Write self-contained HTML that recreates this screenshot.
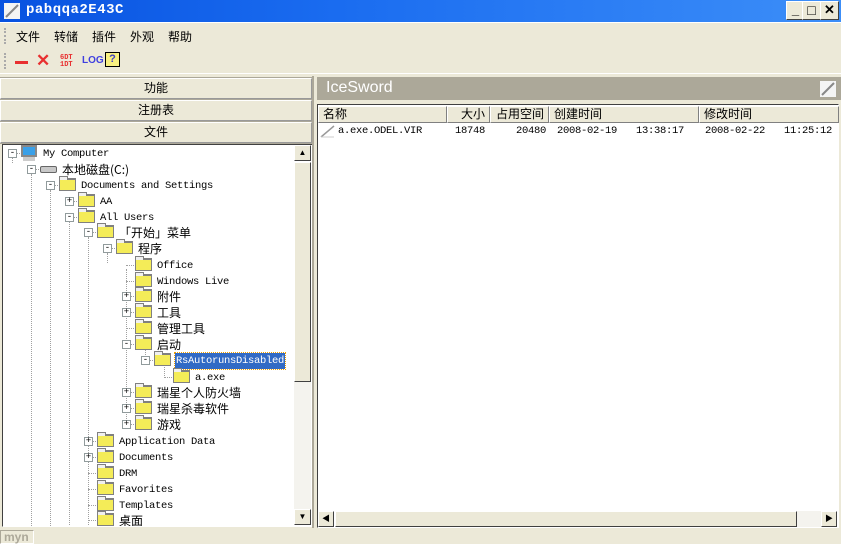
<!DOCTYPE html>
<html><head><meta charset="utf-8"><style>
*{margin:0;padding:0;box-sizing:border-box}
body{width:841px;height:544px;overflow:hidden;background:#ece9d8;position:relative;font-family:"Liberation Sans","Noto Sans CJK SC",sans-serif;font-size:12px;color:#000}
.a{position:absolute}
.title{left:0;top:0;width:841px;height:22px;background:linear-gradient(90deg,#0852e0 0%,#1a6cf0 40%,#3c8ef8 100%);}
.title span{position:absolute;left:26px;top:2px;color:#fff;font:bold 14px "Liberation Mono",monospace;letter-spacing:0.5px}
.wb{top:1px;width:19px;height:19px;background:#ece9d8;border:1px solid;border-color:#fff #404040 #404040 #fff;font:bold 13px "Liberation Sans",sans-serif;text-align:center;line-height:16px}
.menu span{position:absolute;top:28px;font-size:12px}
.btn{left:0;width:312px;height:21px;border:1px solid;border-color:#fff #999 #999 #fff;background:#ece9d8;text-align:center;line-height:19px;font-size:12px;outline:1px solid #aca899}
.tree{left:2px;top:144px;width:311px;height:383px;background:#fff;border:1px solid;border-color:#404040 #fff #fff #404040;overflow:hidden}
.t{position:absolute;font:10.5px "Liberation Mono","Noto Sans CJK SC",monospace;white-space:nowrap;letter-spacing:-0.3px}
.cj{font:12px "Noto Sans CJK SC","WenQuanYi Zen Hei",sans-serif;letter-spacing:0}
.box{position:absolute;width:9px;height:9px;border:1px solid #919b9c;background:#fff;font:9px/7px "Liberation Mono",monospace;text-align:center}
.fd{position:absolute;width:17px;height:13px;background:#f4ec58;border:1px solid #808080;border-top-width:2px}
.fd:before{content:"";position:absolute;left:-1px;top:-4px;width:7px;height:3px;background:#f0f0f0;border:1px solid #808080;border-bottom:none}
.vl{position:absolute;width:0;border-left:1px dotted #a0a0a0}
.hl{position:absolute;height:0;border-top:1px dotted #a0a0a0}
.sb{background:#ece9d8;border:1px solid;border-color:#fff #404040 #404040 #fff}
.hd{position:absolute;top:106px;height:17px;border:1px solid;border-color:#fff #808080 #808080 #fff;background:#ece9d8;font-size:12px;line-height:15px;padding:0 4px}
.rw{position:absolute;top:124px;font:10.5px "Liberation Mono",monospace;line-height:14px;letter-spacing:-0.3px}
</style></head><body>
<div class="a title"><span>pabqqa2E43C</span>
<svg class="a" style="left:4px;top:3px" width="16" height="16"><rect x="0" y="0" width="16" height="16" fill="#f4f4f4"/><line x1="2" y1="14" x2="14" y2="2" stroke="#888" stroke-width="2"/></svg>
</div>
<div class="a wb" style="left:786px">_</div>
<div class="a wb" style="left:802px;font-size:14px">□</div>
<div class="a wb" style="left:820px">✕</div>
<div class="a" style="left:0;top:22px;width:841px;height:1px;background:#fff"></div>
<div class="a" style="left:4px;top:28px;width:3px;height:16px;border-left:2px dotted #aaa"></div>
<div class="menu"><span style="left:16px">文件</span><span style="left:54px">转储</span><span style="left:92px">插件</span><span style="left:130px">外观</span><span style="left:168px">帮助</span></div>
<div class="a" style="left:4px;top:53px;width:3px;height:16px;border-left:2px dotted #aaa"></div>
<div class="a" style="left:15px;top:61px;width:13px;height:3px;background:#e83030"></div>
<div class="a" style="left:36px;top:52px;color:#e83030;font:bold 17px/18px 'Liberation Sans',sans-serif">✕</div>
<div class="a" style="left:60px;top:55px;color:#e83030;font:bold 7px/7px 'Liberation Mono',monospace">6DT<br>1DT</div>
<div class="a" style="left:82px;top:55px;color:#4040e0;font:bold 10px 'Liberation Sans',sans-serif">LOG</div>
<div class="a" style="left:105px;top:52px;width:15px;height:15px;background:#f8f080;border:1px solid #000;font:bold 11px/13px sans-serif;text-align:center;color:#4040c0">?</div>
<div class="a" style="left:0;top:73px;width:841px;height:1px;background:#fff"></div>
<div class="a btn" style="top:78px">功能</div>
<div class="a btn" style="top:100px">注册表</div>
<div class="a btn" style="top:122px">文件</div>
<div class="a tree">
<div class="vl" style="left:9px;top:12px;height:6px"></div>
<div class="vl" style="left:28px;top:29px;height:360px"></div>
<div class="vl" style="left:47px;top:45px;height:340px"></div>
<div class="vl" style="left:66px;top:76px;height:310px"></div>
<div class="vl" style="left:85px;top:92px;height:290px"></div>
<div class="vl" style="left:104px;top:108px;height:10px"></div>
<div class="vl" style="left:123px;top:124px;height:156px"></div>
<div class="vl" style="left:142px;top:204px;height:12px"></div>
<div class="vl" style="left:161px;top:220px;height:13px"></div>
<div id="rows"></div>
</div>
<div class="a sb" style="left:294px;top:145px;width:17px;height:16px;text-align:center;font-size:8px;line-height:14px">▲</div>
<div class="a sb" style="left:294px;top:162px;width:17px;height:220px"></div>
<div class="a" style="left:294px;top:382px;width:17px;height:127px;background:#f4f3ee"></div>
<div class="a sb" style="left:294px;top:509px;width:17px;height:16px;text-align:center;font-size:8px;line-height:14px">▼</div>
<div class="a" style="left:312px;top:76px;width:2px;height:452px;background:#aca899"></div>
<div class="a" style="left:317px;top:77px;width:524px;height:23px;background:#aca899"></div>
<div class="a" style="left:326px;top:79px;color:#fff;font:16px 'Liberation Sans',sans-serif">IceSword</div>
<svg class="a" style="left:820px;top:81px" width="16" height="16"><rect width="16" height="16" fill="#f4f4f4"/><line x1="2" y1="14" x2="14" y2="2" stroke="#888" stroke-width="2"/></svg>
<div class="a" style="left:317px;top:104px;width:522px;height:424px;background:#fff;border:1px solid;border-color:#404040 #fff #fff #404040"></div>
<div class="hd" style="left:318px;width:129px">名称</div>
<div class="hd" style="left:447px;width:43px;text-align:right">大小</div>
<div class="hd" style="left:490px;width:59px;text-align:right">占用空间</div>
<div class="hd" style="left:549px;width:150px">创建时间</div>
<div class="hd" style="left:699px;width:140px">修改时间</div>
<svg class="a" style="left:320px;top:124px" width="16" height="14"><line x1="1" y1="13" x2="14" y2="2" stroke="#999" stroke-width="1.5"/><line x1="1" y1="13" x2="14" y2="13" stroke="#ccc"/></svg>
<div class="rw" style="left:338px">a.exe.ODEL.VIR</div>
<div class="rw" style="left:455px">18748</div>
<div class="rw" style="left:516px">20480</div>
<div class="rw" style="left:557px">2008-02-19</div>
<div class="rw" style="left:636px">13:38:17</div>
<div class="rw" style="left:705px">2008-02-22</div>
<div class="rw" style="left:784px">11:25:12</div>
<div class="a sb" style="left:318px;top:511px;width:16px;height:16px;font-size:8px;line-height:14px;text-align:center">◀</div>
<div class="a sb" style="left:335px;top:511px;width:462px;height:16px"></div>
<div class="a" style="left:797px;top:511px;width:24px;height:16px;background:#f4f3ee"></div>
<div class="a sb" style="left:821px;top:511px;width:16px;height:16px;font-size:8px;line-height:14px;text-align:center">▶</div>
<div class="a" style="left:0;top:530px;width:34px;height:14px;border:1px solid;border-color:#aca899 #fff #fff #aca899;color:#aca899;font:bold 12px/13px 'Liberation Sans',sans-serif;padding-left:3px">myn</div>
<script>
var R=[[0,153,'-','pc','My Computer'],[1,169,'-','hd','本地磁盘(C:)'],[2,185,'-','f','Documents and Settings'],[3,201,'+','f','AA'],[3,217,'-','f','All Users'],[4,232,'-','f','「开始」菜单'],[5,248,'-','f','程序'],[6,265,'','f','Office'],[6,281,'','f','Windows Live'],[6,296,'+','f','附件'],[6,312,'+','f','工具'],[6,328,'','f','管理工具'],[6,344,'-','f','启动'],[7,360,'-','f','RsAutorunsDisabled',1],[8,377,'','f','a.exe'],[6,392,'+','f','瑞星个人防火墙'],[6,408,'+','f','瑞星杀毒软件'],[6,424,'+','f','游戏'],[4,441,'+','f','Application Data'],[4,457,'+','f','Documents'],[4,473,'','f','DRM'],[4,489,'','f','Favorites'],[4,505,'','f','Templates'],[4,520,'','f','桌面']];
var h='';
R.forEach(function(r){var L=r[0],y=r[1]-145,bx=5+19*L,ix=bx+13,tx=39+19*L;
h+='<div class="hl" style="left:'+(bx+4)+'px;top:'+y+'px;width:10px"></div>';
if(r[2])h+='<div class="box" style="left:'+bx+'px;top:'+(y-4)+'px">'+(r[2]=='+'?'+':'-')+'</div>';
if(r[3]=='f')h+='<div class="fd" style="left:'+ix+'px;top:'+(y-7)+'px"></div>';
else if(r[3]=='pc')h+='<div style="position:absolute;left:'+ix+'px;top:'+(y-8)+'px;width:16px;height:12px;background:#3aa0e8;border:2px solid #888"></div><div style="position:absolute;left:'+(ix+2)+'px;top:'+(y+4)+'px;width:12px;height:4px;background:#ccc"></div>';
else h+='<div style="position:absolute;left:'+ix+'px;top:'+(y-3)+'px;width:17px;height:7px;background:#c8c8c8;border:1px solid #666;border-radius:2px"></div>';
var cj=/[^\x00-\x7f]/.test(r[4]);
var st=r[5]?'background:#316ac5;color:#fff;outline:1px dotted #f0a000;':'';
h+='<div class="t'+(cj?' cj':'')+'" style="left:'+tx+'px;top:'+(y-7)+'px;line-height:16px;padding:0 1px;'+st+'">'+r[4]+'</div>';});
document.getElementById('rows').innerHTML=h;
</script>
</body></html>
